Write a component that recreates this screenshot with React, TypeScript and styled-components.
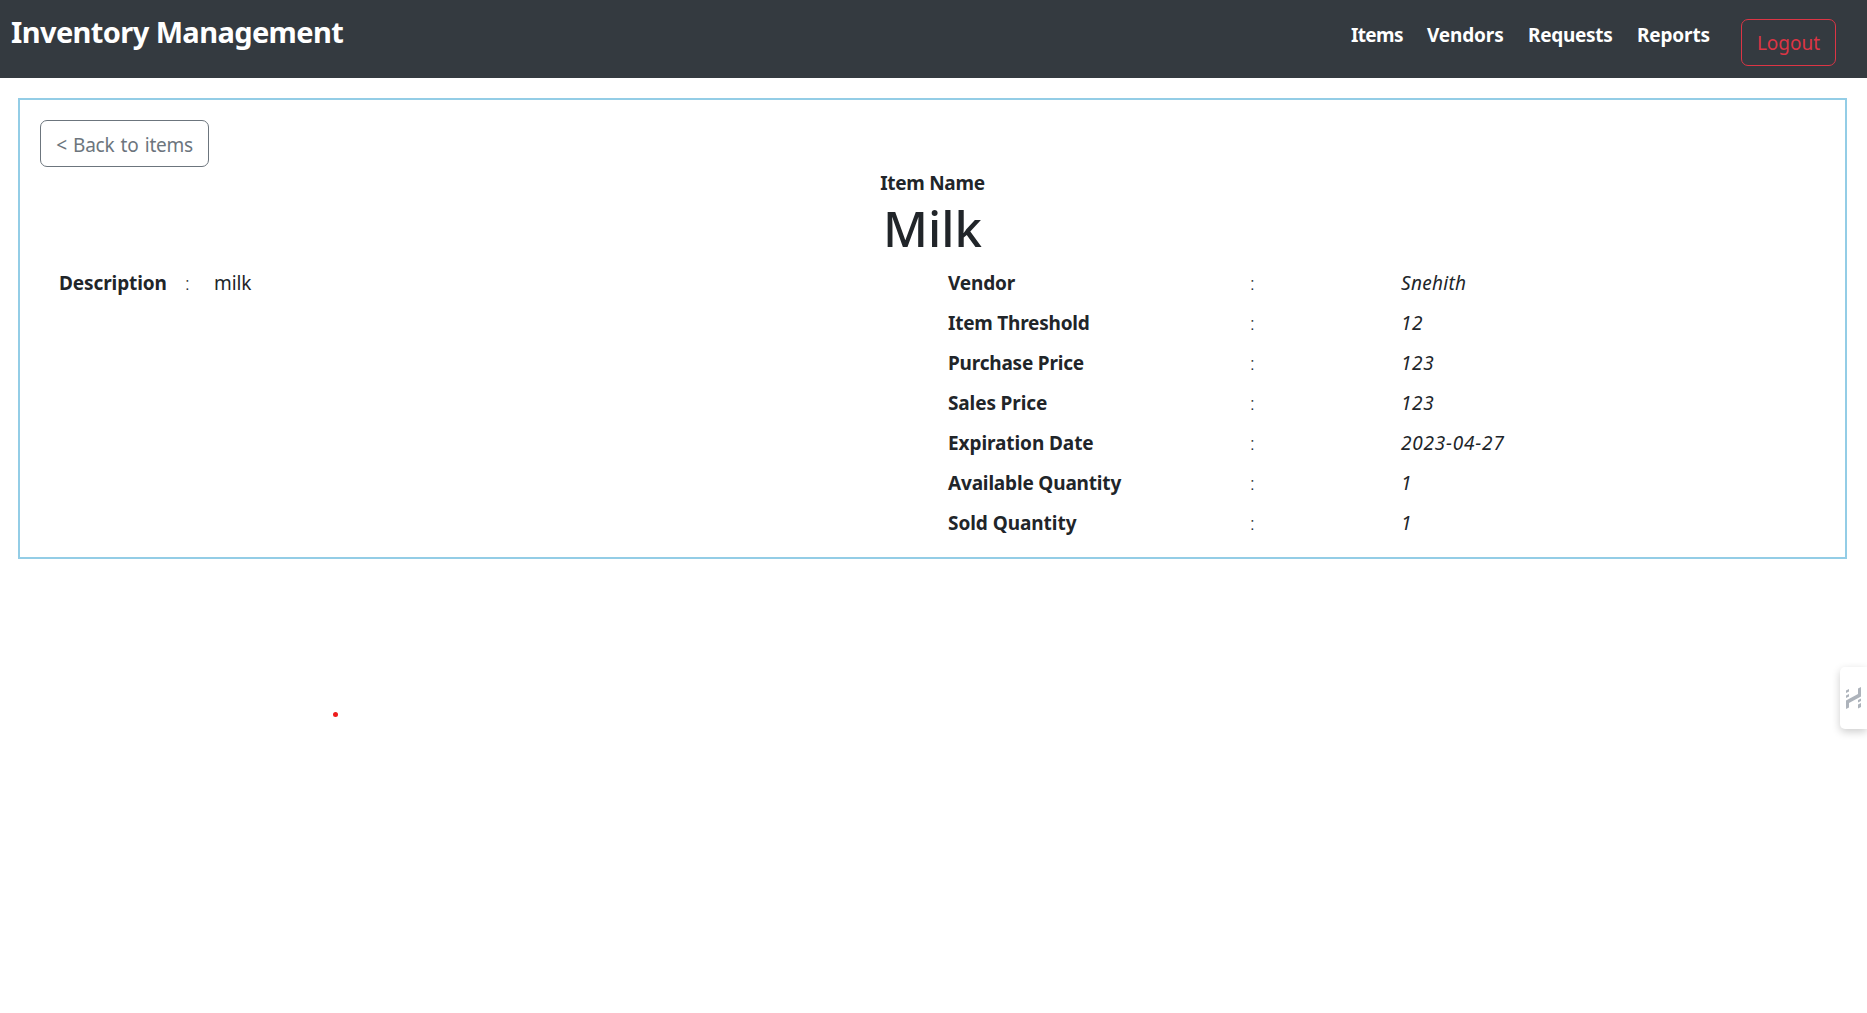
import React from 'react';
import styled, { createGlobalStyle } from 'styled-components';

const GlobalStyle = createGlobalStyle`
  * { box-sizing: border-box; }
  body {
    margin: 0;
    background: #fff;
    color: #212529;
    font-family: "Segoe UI", "Noto Sans", "Open Sans", sans-serif;
    font-size: 19px;
    line-height: 30px;
  }
`;

const Fit = styled.span<{ $ls?: number; $ws?: number }>`
  letter-spacing: ${p => p.$ls ?? 0}px;
  word-spacing: ${p => p.$ws ?? 0}px;
  white-space: nowrap;
`;

const Header = styled.header`
  display: flex;
  justify-content: space-between;
  align-items: flex-start;
  height: 78px;
  padding: 0 31px 0 11px;
  background: #343a40;
  color: #fff;
  font-weight: 700;
`;

const Brand = styled.h1`
  margin: 9px 0 0;
  font-size: 29px;
  line-height: 45px;
`;

const Nav = styled.nav`
  display: flex;
  align-items: flex-start;
  padding-top: 19px;
`;

const NavLink = styled.a<{ $w: number }>`
  width: ${p => p.$w}px;
  padding-top: 1px;
`;

const Button = styled.button<{ $color: string; $w: number; $top?: number }>`
  display: flex;
  justify-content: center;
  width: ${p => p.$w}px;
  height: 47px;
  padding: ${p => p.$top ?? 9}px 0 0;
  border: 1px solid ${p => p.$color};
  border-radius: 7px;
  background: transparent;
  color: ${p => p.$color};
  font: inherit;
  font-weight: 400;
`;

const Card = styled.main`
  width: 1829px;
  height: 461px;
  margin: 20px 0 0 18px;
  padding: 20px;
  border: 2px solid #93cde6;
`;

const Title = styled.section`
  display: flex;
  flex-direction: column;
  align-items: center;
  height: 101px;
  padding-top: 1px;
`;

const Label = styled.strong`
  font-weight: 700;
`;

const Name = styled.h2`
  margin: 0;
  font-size: 49px;
  font-weight: 500;
  line-height: 60px;
`;

const Columns = styled.section`
  display: grid;
  grid-template-columns: 889px 1fr;
  padding-left: 19px;
`;

const Description = styled.div`
  display: flex;
  height: 30px;
`;

const Cell = styled.span<{ $w: number }>`
  width: ${p => p.$w}px;
`;

const Details = styled.div`
  display: grid;
  grid-template-columns: 302px 151px 1fr;
  grid-auto-rows: 40px;
`;

const Colon = styled.span`
  font-weight: 350;
`;

const Value = styled.em``;

const SideTab = styled.aside`
  position: fixed;
  right: 0;
  top: 667px;
  display: flex;
  align-items: center;
  width: 27px;
  height: 62px;
  padding-left: 6px;
  border-radius: 5px 0 0 5px;
  background: #fff;
  box-shadow: 0 3px 9px rgba(0, 0, 0, 0.2);
`;

const Pointer = styled.i`
  position: fixed;
  left: 333px;
  top: 712px;
  width: 5px;
  height: 5px;
  border-radius: 50%;
  background: #ee1c1c;
`;

const links = [
  { text: 'Items', w: 76, ls: -0.65 },
  { text: 'Vendors', w: 101, ls: -0.15 },
  { text: 'Requests', w: 109, ls: -0.3 },
  { text: 'Reports', w: 104, ls: -0.15 },
];

const details = [
  { label: 'Vendor', ls: -0.15, value: 'Snehith', vls: 0.3 },
  { label: 'Item Threshold', ls: -0.22, value: '12', vls: 0.6 },
  { label: 'Purchase Price', ls: -0.2, value: '123', vls: 0.6 },
  { label: 'Sales Price', ls: -0.12, value: '123', vls: 0.6 },
  { label: 'Expiration Date', ls: -0.08, value: '2023-04-27', vls: 0.8 },
  { label: 'Available Quantity', ls: -0.17, value: '1', vls: 0 },
  { label: 'Sold Quantity', ls: -0.05, value: '1', vls: 0 },
];

export default function App() {
  return (
    <>
      <GlobalStyle />
      <Header>
        <Brand><Fit $ls={-0.6}>Inventory Management</Fit></Brand>
        <Nav>
          {links.map(l => (
            <NavLink key={l.text} $w={l.w}><Fit $ls={l.ls}>{l.text}</Fit></NavLink>
          ))}
          <Button $color="#dc3545" $w={95} $top={8}><Fit>Logout</Fit></Button>
        </Nav>
      </Header>
      <Card>
        <Button $color="#6c757d" $w={169}><Fit $ls={-0.25} $ws={1.6}>&lt; Back to items</Fit></Button>
        <Title>
          <Label><Fit $ls={-0.3}>Item Name</Fit></Label>
          <Name><Fit>Milk</Fit></Name>
        </Title>
        <Columns>
          <Description>
            <Cell $w={126}><Label><Fit $ls={-0.1}>Description</Fit></Label></Cell>
            <Cell $w={29}><Colon>:</Colon></Cell>
            <Fit $ls={-0.1}>milk</Fit>
          </Description>
          <Details>
            {details.map(d => (
              <React.Fragment key={d.label}>
                <Label><Fit $ls={d.ls}>{d.label}</Fit></Label>
                <Colon>:</Colon>
                <Value><Fit $ls={d.vls}>{d.value}</Fit></Value>
              </React.Fragment>
            ))}
          </Details>
        </Columns>
      </Card>
      <Pointer />
      <SideTab>
        <svg width="15" height="22" viewBox="0 0 15 22" fill="#adb3bb">
          <path d="M0 22V13.500L12 7V1.500L15 0V9.500L3 16V20.500ZM0 3.500L3 2V4.500L0 6ZM0 8.500L3 7V9.500L0 11ZM12 13L15 11.500V14L12 15.500ZM12 17.500L15 16V20L12 21.500Z" />
        </svg>
      </SideTab>
    </>
  );
}
